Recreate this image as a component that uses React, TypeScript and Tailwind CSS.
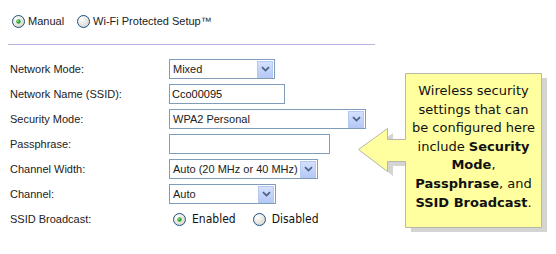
import React from "react";

const Radio = ({ checked }: { checked?: boolean }) => (
  <svg width="13" height="13" viewBox="0 0 13 13" className="shrink-0">
    <defs>
      <radialGradient id={checked ? "rg1" : "rg0"} cx="0.35" cy="0.3" r="0.8">
        <stop offset="0" stopColor="#ffffff" />
        <stop offset="1" stopColor="#d6d3c8" />
      </radialGradient>
    </defs>
    <circle cx="6.5" cy="6.5" r="6" fill={`url(#${checked ? "rg1" : "rg0"})`} stroke="#1c5180" strokeWidth="1" />
    {checked && <circle cx="6.5" cy="6.5" r="2.2" fill="#2fa52f" />}
    {checked && <circle cx="6" cy="6" r="0.9" fill="#8fe08f" />}
  </svg>
);

const DropBtn = () => (
  <div className="h-[17px] w-[16px] mr-px border border-[#b4c8f0] bg-gradient-to-b from-[#d4e0fd] to-[#b5c9f7] flex items-center justify-center">
    <svg width="9" height="6" viewBox="0 0 9 6">
      <path d="M1 1.2 L4.5 4.6 L8 1.2" fill="none" stroke="#4d6185" strokeWidth="1.8" />
    </svg>
  </div>
);

const Select = ({ value, w }: { value: string; w: string }) => (
  <div className={`${w} shrink-0 h-[20px] border border-[#7f9db9] bg-white flex items-center justify-between`}>
    <span className="pl-[3px] text-[11px] text-[#222]">{value}</span>
    <DropBtn />
  </div>
);

const Input = ({ value, w }: { value?: string; w: string }) => (
  <div className={`${w} shrink-0 h-[20px] border border-[#7f9db9] bg-white flex items-center`}>
    <span className="pl-[2px] text-[11px] text-[#111]">{value}</span>
  </div>
);

const Row = ({ label, children }: { label: string; children: React.ReactNode }) => (
  <div className="h-[25px] flex items-start pt-[3px]">
    <div className="w-[169px] shrink-0 h-[20px] pl-[10px] flex items-center text-[11px] text-[#222]">{label}</div>
    {children}
  </div>
);

export default function App() {
  return (
    <div
      className="relative w-[556px] h-[254px] bg-white overflow-hidden"
      style={{ fontFamily: '"Liberation Sans", Arial, sans-serif' }}
    >
      <div className="pt-[15px] pl-[12px] flex items-center h-[28px] text-[11px] text-[#222]">
        <Radio checked />
        <span className="ml-[3px]">Manual</span>
        <span className="ml-[13px]">
          <Radio />
        </span>
        <span className="ml-[3px]">Wi-Fi Protected Setup™</span>
      </div>
      <div className="mt-[16px] ml-[8px] w-[367px] h-px bg-[#b6b6e6]" />
      <div className="mt-[11px]">
        <Row label="Network Mode:">
          <Select value="Mixed" w="w-[106px]" />
        </Row>
        <Row label="Network Name (SSID):">
          <Input value="Cco00095" w="w-[116px]" />
        </Row>
        <Row label="Security Mode:">
          <Select value="WPA2 Personal" w="w-[197px]" />
        </Row>
        <Row label="Passphrase:">
          <Input w="w-[161px]" />
        </Row>
        <Row label="Channel Width:">
          <Select value="Auto (20 MHz or 40 MHz)" w="w-[149px]" />
        </Row>
        <Row label="Channel:">
          <Select value="Auto" w="w-[107px]" />
        </Row>
        <Row label="SSID Broadcast:">
          <div
            className="h-[20px] flex items-center pl-[4px] text-[12px] text-[#111]"
            style={{ fontFamily: '"DejaVu Sans Condensed", "DejaVu Sans", sans-serif' }}
          >
            <Radio checked />
            <span className="ml-[6px]">Enabled</span>
            <span className="ml-[17px]">
              <Radio />
            </span>
            <span className="ml-[6px]">Disabled</span>
          </div>
        </Row>
      </div>

      {/* callout */}
      <svg
        className="absolute left-[350px] top-[65px]"
        width="206"
        height="175"
        viewBox="350 65 206 175"
      >
        <path
          d="M411 78 H547 V232 H411 V166 H393 V176 L364 154 L393 133 V144 H411 Z"
          fill="#d4d4d4"
        />
        <path
          d="M405.5 73.5 H541.5 V227.5 H405.5 V161.5 H387.5 V171.5 L358.5 149.5 L387.5 128.5 V139.5 H405.5 Z"
          fill="#ffff9f"
          stroke="#b8b8a8"
          strokeWidth="1"
        />
      </svg>
      <div
        className="absolute left-[406px] top-[82px] w-[135px] text-center text-[13px] leading-[18.6px] text-[#111]"
        style={{ fontFamily: '"DejaVu Sans", Verdana, sans-serif' }}
      >
        Wireless security
        <br />
        settings that can
        <br />
        be configured here
        <br />
        include <b>Security</b>
        <br />
        <b>Mode</b>,
        <br />
        <b>Passphrase</b>, and
        <br />
        <b>SSID Broadcast</b>.
      </div>
    </div>
  );
}
